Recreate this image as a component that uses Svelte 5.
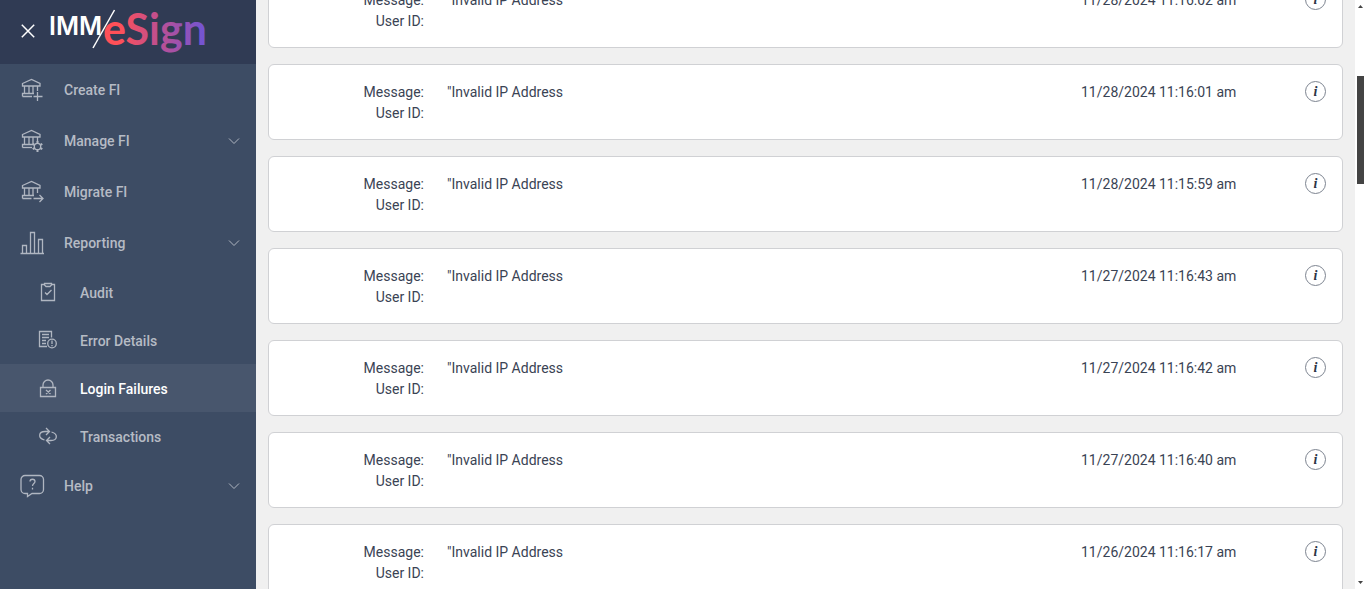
<script>
    import {onMount} from 'svelte'
    let pane
    const menu = [
        {label: 'Create FI', icon: 'create'},
        {label: 'Manage FI', icon: 'manage', more: true},
        {label: 'Migrate FI', icon: 'migrate'},
        {label: 'Reporting', icon: 'chart', more: true, children: [
            {label: 'Audit', icon: 'audit'},
            {label: 'Error Details', icon: 'error'},
            {label: 'Login Failures', icon: 'lock'},
            {label: 'Transactions', icon: 'sync'}
        ]},
        {label: 'Help', icon: 'help', more: true}
    ]
    let active = 'Login Failures'
    const failures = [
        {date: '11/28/2024 11:16:02 am', user: ''},
        {date: '11/28/2024 11:16:01 am', user: ''},
        {date: '11/28/2024 11:15:59 am', user: ''},
        {date: '11/27/2024 11:16:43 am', user: ''},
        {date: '11/27/2024 11:16:42 am', user: ''},
        {date: '11/27/2024 11:16:40 am', user: ''},
        {date: '11/26/2024 11:16:17 am', user: ''}
    ]

    onMount(() => {
        pane.scrollTop = 44
    })
</script>

<div class="wrapper">
    <nav class="sidebar">
        <div class="brand">
            <button class="close" aria-label="Close menu">
                <svg width="14" height="14" viewBox="0 0 14 14"><path d="M.8.8l12.400 12.400M13.200.8L.8 13.200"/></svg>
            </button>
            <svg class="logo" width="164" height="60" viewBox="0 0 164 60" role="img" aria-label="IMM eSign">
                <defs>
                    <linearGradient id="fade" gradientUnits="userSpaceOnUse" x1="54" y1="0" x2="156" y2="0">
                        <stop offset="0.15" stop-color="#ff5058"/>
                        <stop offset="0.5" stop-color="#c44f8c"/>
                        <stop offset="1" stop-color="#6f55d6"/>
                    </linearGradient>
                </defs>
                <text class="imm" x="-1" y="34">IMM</text>
                <path class="slash" d="M43 47L64.500 9"/>
                <text class="esign" x="53" y="44" fill="url(#fade)">eSign</text>
            </svg>
        </div>
        <ul>
            {#each menu as item}
                <li>
                    <a class="item" href="#top">
                        <svg class="icon" width="23" height="23" viewBox="0 0 23 23">
                            {#if item.icon === 'chart'}
                                <path d="M-.5 22.500h23.500M1.500 22v-7.500h4V22M9.500 22V1.500h4V22M17.500 22V8.500h4V22"/>
                            {:else if item.icon === 'help'}
                                <path d="M4 1.500h14.500a4 4 0 0 1 4 4v10a4 4 0 0 1-4 4H11L6.500 22.500v-3H4a4 4 0 0 1-4-4v-10a4 4 0 0 1 4-4z"/>
                                <path d="M9 7.500c0-3 5-3 5 0 0 2-2.500 2-2.500 4.500M11.500 13.800v1.600"/>
                            {:else}
                                <path d="M1.500 5.500L10.500 1.500l8.500 4v2.500h-17.500zM3.500 8v7.500M8 8v7.500M12 8v7.500M16.500 8v5M13 15.500H1.500v3"/>
                                {#if item.icon === 'create'}
                                    <path d="M1.500 18.500H11M16.500 14v9M12.500 18.500h9"/>
                                {:else if item.icon === 'manage'}
                                    <path d="M1.500 18.500H11"/>
                                    <circle cx="16.500" cy="17.500" r="3.200"/>
                                    <path class="teeth" d="M16.500 14v-2M16.500 21v2M13.500 15.800l-1.800-1M19.500 19.200l1.800 1M13.500 19.200l-1.800 1M19.500 15.800l1.800-1"/>
                                {:else}
                                    <path d="M1.500 18.500H10.500M12.500 18.500h9.500M18.500 15l3.500 3.500-3.500 3.500"/>
                                {/if}
                            {/if}
                        </svg>
                        <span>{item.label}</span>
                        {#if item.more}
                            <svg class="chevron" width="12" height="7" viewBox="0 0 12 7"><path d="M1 1.500l5 5 5-5"/></svg>
                        {/if}
                    </a>
                    {#if item.children}
                        <ul>
                            {#each item.children as child}
                                <li>
                                    <a class={child.label === active ? 'item sub active' : 'item sub'} href="#top">
                                        <svg class="icon" width="18" height="20" viewBox="0 0 18 20">
                                            {#if child.icon === 'audit'}
                                                <path d="M5.500 2.500h-3v16h13v-16h-3M5.500 1.500h7v1.500l-1.500 1.500h-4L5.500 3zM6 10.500l2 2 4.500-4.500"/>
                                            {:else if child.icon === 'error'}
                                                <path d="M8 16.500H.5v-15h12v6M3 4.500h7M3 7.500h7M3 10.500h4M3 13.500h4M13 10.500v3.500M13 15v1.200"/>
                                                <circle cx="13" cy="13.500" r="4.300"/>
                                            {:else if child.icon === 'lock'}
                                                <path d="M1.500 9.500h15v9h-15zM4 9.500V7a5 5 0 0 1 10 0v2.500M7 12l4.500 4M11.500 12L7 16"/>
                                            {:else}
                                                <path d="M5.500 14C-1.500 12-.5 5.500 6 5.500h4.500M7 2l3.500 3.500L7 9M12.500 6C19.500 8 18.500 14.500 12 14.500H7.500M11 11l-3.500 3.500L11 18"/>
                                            {/if}
                                        </svg>
                                        <span>{child.label}</span>
                                    </a>
                                </li>
                            {/each}
                        </ul>
                    {/if}
                </li>
            {/each}
        </ul>
    </nav>

    <main bind:this={pane}>
        {#each failures as row}
            <div class="card">
                <dl>
                    <dt>Message:</dt>
                    <dd>"Invalid IP Address</dd>
                    <dt>User ID:</dt>
                    <dd>{row.user}</dd>
                </dl>
                <time>{row.date}</time>
                <button class="info" aria-label="Details">i</button>
            </div>
        {/each}
    </main>

    <div class="scrollbar">
        <svg width="5" height="3" viewBox="0 0 5 3"><path d="M0 3L2.500 0 5 3z"/></svg>
        <div class="track">
            <div class="thumb"></div>
        </div>
        <svg width="5" height="3" viewBox="0 0 5 3"><path d="M0 0l2.500 3L5 0z"/></svg>
    </div>
</div>

<style>
    :global(body){
        margin: 0;
    }
    .wrapper{
        display: flex;
        height: 100vh;
        overflow: hidden;
        font-family: Roboto, sans-serif;
        font-size: 14px;
        line-height: 21px;
        color: #3a4354;
    }
    .sidebar{
        flex: 0 0 256px;
        background: #3d4c64;
    }
    .brand{
        display: flex;
        align-items: center;
        height: 64px;
        box-sizing: border-box;
        padding: 0 0 2px 21px;
        background: #303b54;
    }
    button{
        padding: 0;
        cursor: pointer;
        background: none;
        border: none;
    }
    .close{
        display: flex;
        margin-right: 15px;
    }
    .close svg{
        stroke: #fff;
        stroke-width: 1.5;
    }
    .logo{
        overflow: visible;
    }
    .imm{
        font: 600 25px Inter, sans-serif;
        fill: #fff;
    }
    .esign{
        font: 700 43px Lato, sans-serif;
    }
    .slash{
        stroke: #fff;
        stroke-width: 1.5;
    }
    ul{
        list-style: none;
        margin: 0;
        padding: 0;
    }
    .item{
        display: flex;
        align-items: center;
        height: 51px;
        padding: 0 16px 0 21px;
        color: #b6bbc4;
        font-weight: 500;
        text-decoration: none;
    }
    .item span{
        flex: 1;
        padding: 2px 0 0 20px;
    }
    .sub{
        height: 48px;
        padding-left: 39px;
    }
    .sub span{
        padding-left: 23px;
    }
    .active{
        background: #48566d;
        color: #fff;
    }
    .icon, .chevron{
        fill: none;
        stroke: #b0b6c1;
        stroke-width: 1.3;
        overflow: visible;
    }
    .icon .teeth{
        stroke-width: 2;
    }
    .chevron{
        stroke-width: 1;
    }
    main{
        flex: 1;
        overflow: hidden;
        padding: 16px 12px;
        background: #f0f0f0;
    }
    .card{
        display: flex;
        align-items: flex-start;
        margin-bottom: 16px;
        padding: 16px 16px 15px;
        background: #fff;
        border: 1px solid #d0d1d4;
        border-radius: 6px;
    }
    dl{
        flex: 1;
        display: grid;
        grid-template-columns: 139px 1fr;
        grid-auto-rows: 21px;
        column-gap: 23px;
        margin: 0;
        padding-top: 1px;
    }
    dt{
        text-align: right;
    }
    dd{
        margin: 0;
    }
    time{
        width: 224px;
        padding-top: 1px;
    }
    .info{
        width: 21px;
        height: 21px;
        border: 1px solid #7d8490;
        border-radius: 50%;
        color: #2b3444;
        font: italic 700 14px/18px "Liberation Serif", serif;
    }
    .scrollbar{
        display: flex;
        flex-direction: column;
        align-items: center;
        width: 11px;
        box-sizing: border-box;
        padding: 5px 0;
        background: #fff;
    }
    .scrollbar svg{
        fill: #444;
    }
    .track{
        flex: 1;
        padding-top: 68px;
    }
    .thumb{
        width: 7px;
        height: 108px;
        background: #444;
    }
</style>
